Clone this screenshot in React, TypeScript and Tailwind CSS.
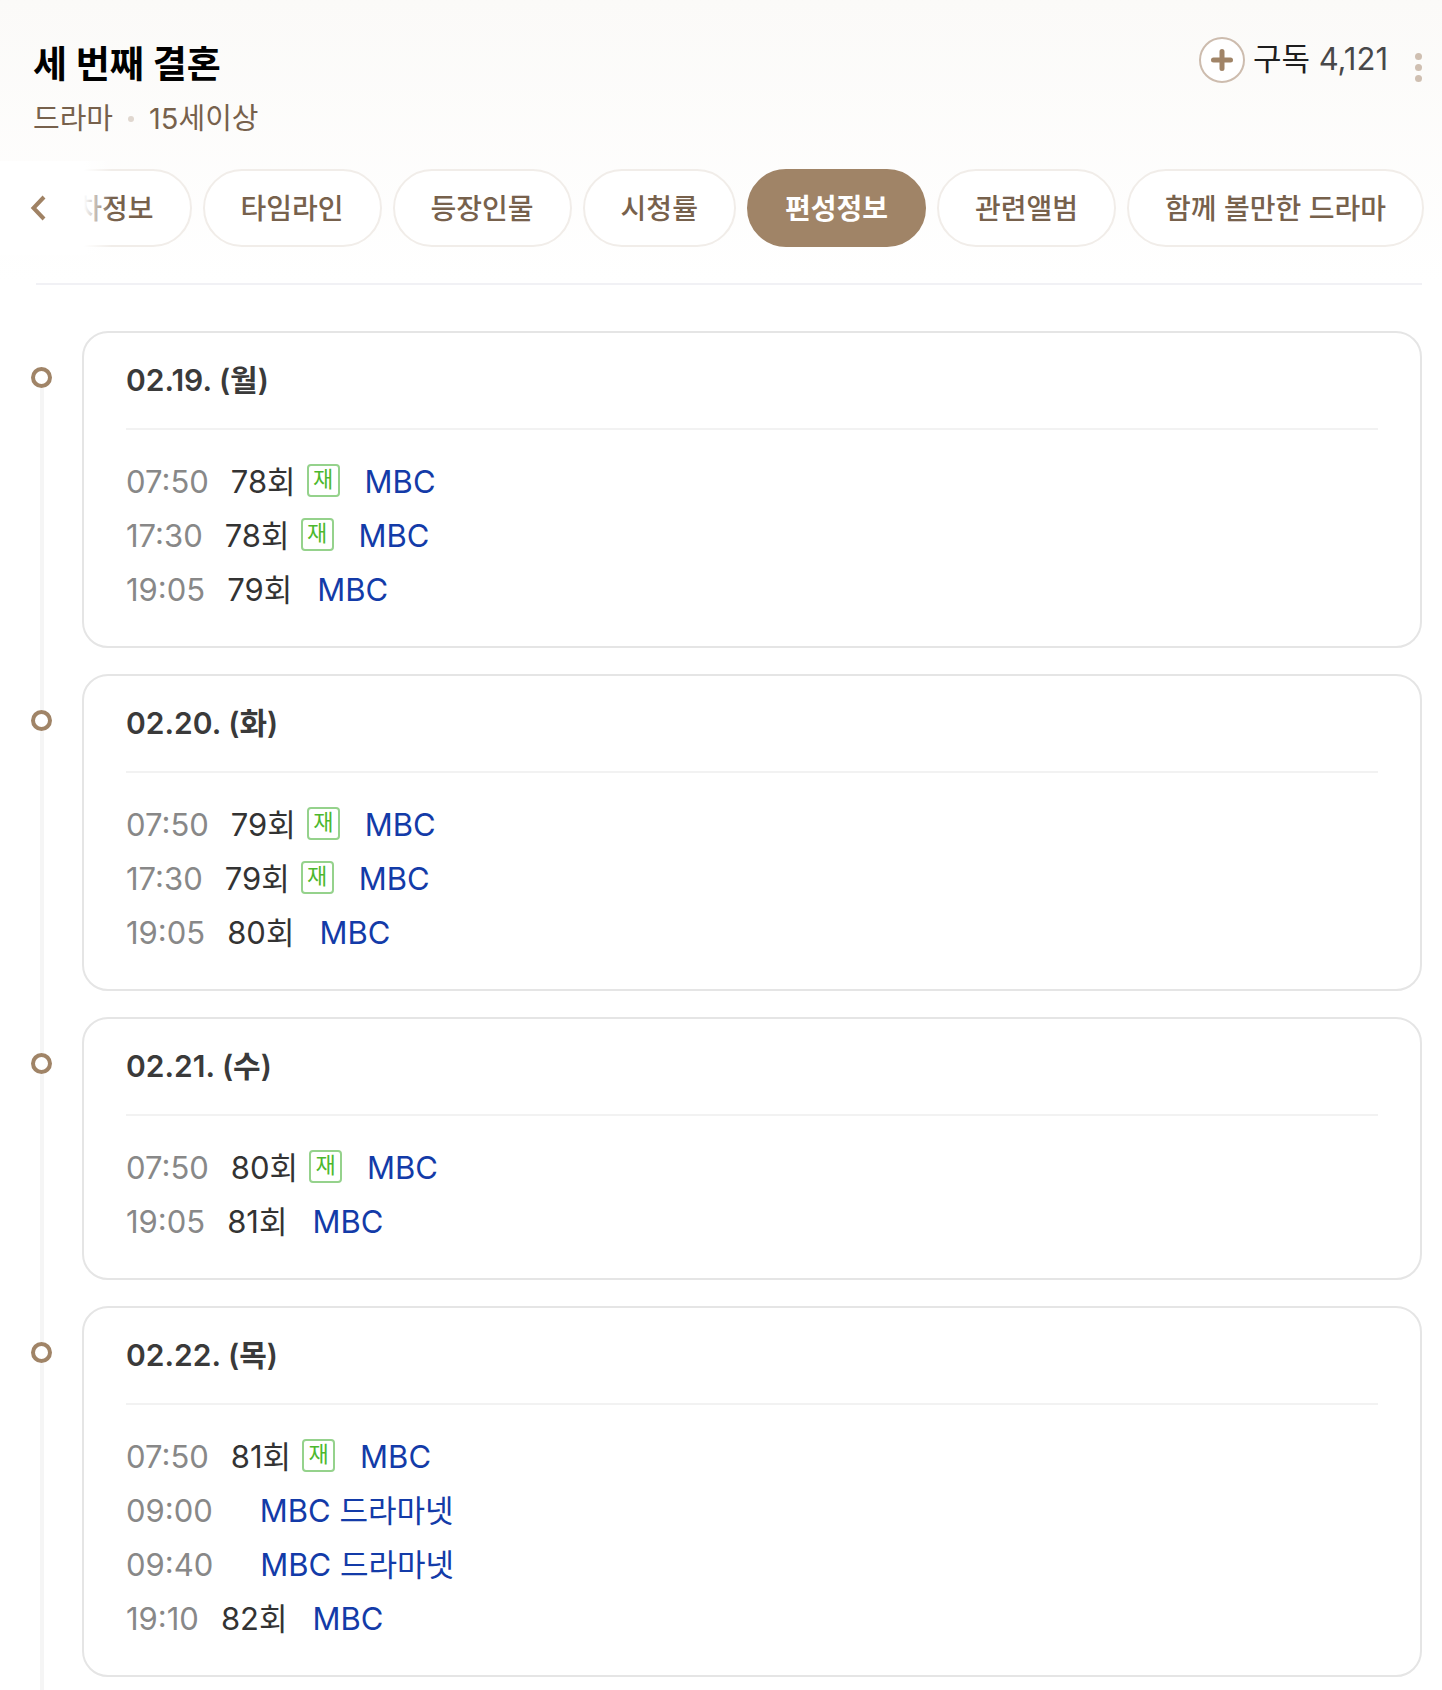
import clsx from "clsx";

interface Airing {
  time: string;
  episode?: string;
  rerun?: boolean;
  channel: string;
}

interface ScheduleDay {
  date: string;
  airings: Airing[];
}

const tabs = [
  "회차정보",
  "타임라인",
  "등장인물",
  "시청률",
  "편성정보",
  "관련앨범",
  "함께 볼만한 드라마",
];

const schedule: ScheduleDay[] = [
  {
    date: "02.19. (월)",
    airings: [
      { time: "07:50", episode: "78회", rerun: true, channel: "MBC" },
      { time: "17:30", episode: "78회", rerun: true, channel: "MBC" },
      { time: "19:05", episode: "79회", channel: "MBC" },
    ],
  },
  {
    date: "02.20. (화)",
    airings: [
      { time: "07:50", episode: "79회", rerun: true, channel: "MBC" },
      { time: "17:30", episode: "79회", rerun: true, channel: "MBC" },
      { time: "19:05", episode: "80회", channel: "MBC" },
    ],
  },
  {
    date: "02.21. (수)",
    airings: [
      { time: "07:50", episode: "80회", rerun: true, channel: "MBC" },
      { time: "19:05", episode: "81회", channel: "MBC" },
    ],
  },
  {
    date: "02.22. (목)",
    airings: [
      { time: "07:50", episode: "81회", rerun: true, channel: "MBC" },
      { time: "09:00", channel: "MBC 드라마넷" },
      { time: "09:40", channel: "MBC 드라마넷" },
      { time: "19:10", episode: "82회", channel: "MBC" },
    ],
  },
];

function Header() {
  return (
    <header className="flex items-start justify-between pl-[33px] pr-5 pt-[37px]">
      <div>
        <h1 className="text-[37px] leading-[56px] font-bold text-black">
          세 번째 결혼
        </h1>
        <p className="flex items-center text-[29px] leading-[52px] text-[#77614c]">
          드라마
          <span className="mx-[15px] size-1.5 rounded-full bg-[#e0d7cf]" />
          15세이상
        </p>
      </div>

      <div className="flex items-start">
        <button className="flex items-center gap-2 text-[31px] leading-[42px] text-[#1e1e1e]">
          <span className="flex size-[46px] items-center justify-center rounded-full border-2 border-[#cdbcae] bg-white">
            <svg className="size-[22px]" viewBox="0 0 22 22" aria-hidden="true">
              <path
                d="M11 2.5v17M2.5 11h17"
                stroke="#a08467"
                strokeWidth="5"
                strokeLinecap="round"
              />
            </svg>
          </span>
          <span className="pb-0.5">
            구독 <span className="text-[#48484a]">4,121</span>
          </span>
        </button>
        <button
          aria-label="더보기"
          className="mt-4 ml-[27px] flex flex-col gap-1"
        >
          <span className="size-[7px] rounded-full bg-[#cfbfb1]" />
          <span className="size-[7px] rounded-full bg-[#cfbfb1]" />
          <span className="size-[7px] rounded-full bg-[#cfbfb1]" />
        </button>
      </div>
    </header>
  );
}

function TabBar() {
  return (
    <nav className="relative mt-4 flex justify-end overflow-hidden py-2 pr-[18px]">
      <div className="flex shrink-0 gap-[11px]">
        {tabs.map((tab) => (
          <button
            key={tab}
            className={clsx(
              "h-[78px] rounded-full border-2 px-9 pt-0.5 text-[28px] whitespace-nowrap",
              tab === "편성정보"
                ? "border-[#a08467] bg-[#a08467] font-bold text-white"
                : "border-[#f1ede9] bg-white font-medium text-[#77614c]"
            )}
          >
            {tab}
          </button>
        ))}
      </div>
      <button
        aria-label="이전"
        className="absolute inset-y-0 left-0 flex w-[112px] items-center bg-linear-to-r from-white from-75% to-white/0 pl-[30px]"
      >
        <svg className="h-[26px] w-4" viewBox="0 0 16 26" aria-hidden="true">
          <path
            d="M14 2 3.5 13 14 24"
            fill="none"
            stroke="#a08264"
            strokeWidth="4"
          />
        </svg>
      </button>
    </nav>
  );
}

function AiringRow({ airing }: { airing: Airing }) {
  return (
    <li className="flex h-[54px] items-center">
      <span className="text-[#888888]">{airing.time}</span>
      <span className="ml-[22px] flex items-center text-[#333333]">
        {airing.episode}
        {airing.rerun && (
          <span className="mb-1 ml-[11px] flex size-[33px] items-center justify-center rounded-[4px] border-2 border-[#95d28c] pb-0.5 text-[22px] leading-none text-[#4cb82e]">
            재
          </span>
        )}
      </span>
      <a href="#" className="ml-[25px] text-[#133ba8]">
        {airing.channel}
      </a>
    </li>
  );
}

function DayItem({
  day,
  first,
  last,
}: {
  day: ScheduleDay;
  first: boolean;
  last: boolean;
}) {
  return (
    <li className="flex gap-[30px]">
      <div className="flex w-[21px] shrink-0 flex-col">
        <span
          className={clsx("ml-[9px] h-9 w-1", !first && "bg-[#f5f5f5]")}
        />
        <span className="size-[21px] rounded-full border-4 border-[#a08467] bg-white" />
        <span className="ml-[9px] w-1 flex-1 bg-[#f5f5f5]" />
      </div>
      <div className={clsx("flex-1", last ? "pb-[13px]" : "pb-[26px]")}>
        <section className="rounded-[26px] border-2 border-[#e5e5e5] bg-white px-[42px] pb-[29px]">
          <h2 className="border-b-2 border-[#f2f2f2] text-[30px] leading-[95px] font-semibold text-[#3a3a3a]">
            {day.date}
          </h2>
          <ul className="pt-[25px] text-[31px]">
            {day.airings.map((airing) => (
              <AiringRow key={airing.time} airing={airing} />
            ))}
          </ul>
        </section>
      </div>
    </li>
  );
}

export default function App() {
  return (
    <div className="min-h-screen bg-white font-[Inter,'Noto_Sans_CJK_KR',sans-serif]">
      <div className="bg-linear-to-b from-[#fbfaf8] to-white pb-7">
        <Header />
        <TabBar />
      </div>
      <hr className="mr-5 ml-9 border-t-2 border-[#f1f1f5]" />
      <ol className="mt-[46px] pr-5 pl-[31px]">
        {schedule.map((day, i) => (
          <DayItem
            key={day.date}
            day={day}
            first={i === 0}
            last={i === schedule.length - 1}
          />
        ))}
      </ol>
    </div>
  );
}
